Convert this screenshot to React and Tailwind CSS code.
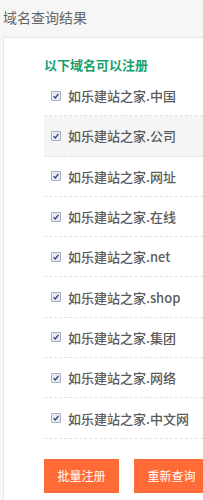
import React from 'react';

const domains = ['中国', '公司', '网址', '在线', 'net', 'shop', '集团', '网络', '中文网'];

const Check = () => (
  <span className="w-[10px] h-[10px] border border-[#a6aec4] bg-[#e8ebf2] rounded-[1px] flex items-center justify-center shrink-0">
    <svg viewBox="0 0 10 10" className="w-[8px] h-[8px]">
      <path d="M2 5.2 L4.1 7.4 L8 2.4" fill="none" stroke="#2c3e7a" strokeWidth="1.6" />
    </svg>
  </span>
);

const App = () => {
  return (
    <div className="w-[203px] h-[500px] overflow-hidden bg-[#f6f6f6] font-['Noto_Sans_CJK_SC','Microsoft_YaHei',sans-serif]">
      <div className="h-[37px] px-[3px] pt-[6px] text-[14px] text-[#666] leading-[22px]">域名查询结果</div>
      <div className="ml-[3px] w-[220px] bg-white border-l border-t border-[#e8e8e8] pl-[40px] pt-[18px] pb-[20px]">
        <div className="text-[13px] font-bold text-[#1a9f6f] leading-[18px] h-[20px]">以下域名可以注册</div>
        <ul>
          {domains.map((d, i) => (
            <li
              key={d}
              className={`h-[40.3px] flex items-center pl-[7px] gap-[7px] border-b border-dashed border-[#e2e2e2] ${i === 1 ? 'bg-[#f5f5f5]' : ''}`}
            >
              <Check />
              <span className="text-[13px] font-medium text-[#5a5a5a] leading-none">如乐建站之家.{d}</span>
            </li>
          ))}
        </ul>
        <div className="flex gap-[15px] mt-[20px]">
          <button className="w-[75px] h-[34px] bg-[#ff6b36] text-white text-[12px] shrink-0">批量注册</button>
          <button className="w-[75px] h-[34px] bg-[#ff6b36] text-white text-[12px] shrink-0">重新查询</button>
        </div>
      </div>
    </div>
  );
};

export default App;
